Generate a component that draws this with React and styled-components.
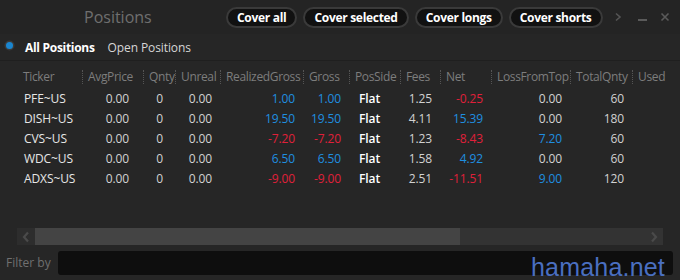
import React from 'react';
import styled, { createGlobalStyle } from 'styled-components';

const Global = createGlobalStyle`
  html, body {
    margin: 0;
    padding: 0;
    background: #262626;
  }
  body {
    font-family: "Open Sans", "Noto Sans", sans-serif;
  }
`;

const Window = styled.div`
  position: relative;
  width: 680px;
  height: 280px;
  background: #262626;
  display: flex;
  flex-direction: column;
  overflow: hidden;
`;

const TitleBar = styled.div`
  height: 34px;
  display: flex;
  align-items: center;
  background: #242424;
`;

const Title = styled.div`
  margin-left: 84px;
  width: 142px;
  flex-shrink: 0;
  font-size: 16px;
  color: #6f6f6f;
`;

const Buttons = styled.div`
  display: flex;
  gap: 6px;
  flex-shrink: 0;
`;

const Pill = styled.button`
  height: 21px;
  padding: 0 9px;
  border-radius: 11px;
  border: 2px solid #3a3a3a;
  background: #111111;
  color: #ffffff;
  font-family: "Open Sans", sans-serif;
  font-weight: 700;
  font-size: 12px;
  letter-spacing: -0.3px;
  line-height: 17px;
  white-space: nowrap;
`;

const WinCtl = styled.div`
  display: flex;
  align-items: center;
  margin-left: 11px;
`;

const Ctl = styled.svg`
  margin-left: ${p => p.gap || 0}px;
`;

const Tabs = styled.div`
  height: 26px;
  display: flex;
  align-items: center;
  border-bottom: 1px solid #1f1f1f;
  font-size: 12px;
`;

const Radio = styled.span`
  width: 7px;
  height: 7px;
  margin: 0 8px 4px 6px;
  border-radius: 50%;
  background: #1a86d0;
  box-shadow: 0 0 0 1.5px #3a3a3a;
`;

const Tab = styled.span`
  padding: 0 9px 0 4px;
  color: ${p => (p.active ? '#ffffff' : '#d6d6d6')};
  font-weight: ${p => (p.active ? 700 : 400)};
  letter-spacing: ${p => (p.active ? '-0.3px' : '-0.1px')};
`;

const Grid = styled.div`
  padding: 4px 0 0 20px;
  flex: 1;
  font-size: 12px;
`;

const cols = '62px 61px 32px 45px 83px 46px 51px 40px 51px 79px 62px 48px';

const Row = styled.div`
  display: grid;
  grid-template-columns: ${cols};
  height: 20px;
  align-items: center;
`;

const HeadRow = styled(Row)`
  height: 23px;
`;

const Head = styled.div`
  color: #7d7d7d;
  padding-left: ${p => (p.first ? '3px' : '5px')};
  white-space: nowrap;
  letter-spacing: -0.35px;
  border-left: ${p => (p.first ? 'none' : '1px dotted #555')};
  line-height: 14px;
`;

const Cell = styled.div`
  text-align: ${p => (p.left ? 'left' : 'right')};
  padding: ${p => (p.left ? `0 0 0 ${p.pl || 4}px` : `0 ${p.pr || 8}px 0 0`)};
  color: ${p => p.color || '#d2d2d2'};
  font-weight: ${p => (p.bold ? 600 : 400)};
  white-space: nowrap;
  letter-spacing: -0.1px;
`;

const Scroll = styled.div`
  margin: 0 17px;
  height: 17px;
  display: flex;
  background: #333333;
`;

const Arrow = styled.div`
  width: 18px;
  display: flex;
  align-items: center;
  justify-content: center;
  background: ${p => p.bg || 'transparent'};
`;

const Thumb = styled.div`
  width: 425px;
  background: #444444;
`;

const Track = styled.div`
  flex: 1;
`;

const Filter = styled.div`
  height: 35px;
  display: flex;
  align-items: center;
  padding: 0 7px 0 6px;
  gap: 7px;
`;

const FilterLabel = styled.span`
  color: #707070;
  font-size: 12px;
`;

const Input = styled.div`
  flex: 1;
  height: 24px;
  background: #0e0e0e;
  border-radius: 3px;
`;

const Watermark = styled.div`
  position: absolute;
  right: 15px;
  bottom: -2px;
  font-family: "Liberation Sans", Arial, sans-serif;
  font-size: 25px;
  color: #4a6fc0;
  letter-spacing: 0.2px;
`;

const BLUE = '#1f8fe0';
const RED = '#e0203a';

const rows = [
  ['PFE~US', '1.00', '1.25', '-0.25', '0.00', '60'],
  ['DISH~US', '19.50', '4.11', '15.39', '0.00', '180'],
  ['CVS~US', '-7.20', '1.23', '-8.43', '7.20', '60'],
  ['WDC~US', '6.50', '1.58', '4.92', '0.00', '60'],
  ['ADXS~US', '-9.00', '2.51', '-11.51', '9.00', '120'],
];

const sign = v => (v.startsWith('-') ? RED : BLUE);
const headers = ['Ticker', 'AvgPrice', 'Qnty', 'Unreal', 'RealizedGross', 'Gross', 'PosSide', 'Fees', 'Net', 'LossFromTop', 'TotalQnty', 'Used'];

const App = () => {
  return (
    <>
      <Global />
      <Window>
        <TitleBar>
          <Title>Positions</Title>
          <Buttons>
            <Pill>Cover all</Pill>
            <Pill>Cover selected</Pill>
            <Pill>Cover longs</Pill>
            <Pill>Cover shorts</Pill>
          </Buttons>
          <WinCtl>
            <Ctl width="8" height="10" viewBox="0 0 8 10">
              <path d="M2 1.5 L6 5 L2 8.5" stroke="#555" strokeWidth="1.6" fill="none" />
            </Ctl>
            <Ctl gap={15} width="12" height="10" viewBox="0 0 12 10">
              <path d="M1 8 H10" stroke="#5a5a5a" strokeWidth="2" />
            </Ctl>
            <Ctl gap={11} width="10" height="10" viewBox="0 0 10 10">
              <path d="M1.5 1.5 L8.5 8.5 M8.5 1.5 L1.5 8.5" stroke="#5a5a5a" strokeWidth="1.6" />
            </Ctl>
          </WinCtl>
        </TitleBar>
        <Tabs>
          <Radio />
          <Tab active>All Positions</Tab>
          <Tab>Open Positions</Tab>
        </Tabs>
        <Grid>
          <HeadRow>
            {headers.map((h, i) => (
              <Head key={h} first={i === 0}>{h}</Head>
            ))}
          </HeadRow>
          {rows.map(r => (
            <Row key={r[0]}>
              <Cell left color="#e6e6e6">{r[0]}</Cell>
              <Cell pr={14}>0.00</Cell>
              <Cell pr={12}>0</Cell>
              <Cell>0.00</Cell>
              <Cell color={sign(r[1])}>{r[1]}</Cell>
              <Cell pr={8} color={sign(r[1])}>{r[1]}</Cell>
              <Cell left pl={10} bold color="#ffffff">Flat</Cell>
              <Cell>{r[2]}</Cell>
              <Cell color={sign(r[3])}>{r[3]}</Cell>
              <Cell color={r[4] === '0.00' ? '#d2d2d2' : BLUE}>{r[4]}</Cell>
              <Cell>{r[5]}</Cell>
              <Cell />
            </Row>
          ))}
        </Grid>
        <Scroll>
          <Arrow bg="#2d2d2d">
            <svg width="8" height="12" viewBox="0 0 8 12">
              <path d="M6 1.5 L2 6 L6 10.5" stroke="#4a4a4a" strokeWidth="2.2" fill="none" />
            </svg>
          </Arrow>
          <Thumb />
          <Track />
          <Arrow>
            <svg width="8" height="12" viewBox="0 0 8 12">
              <path d="M2 1.5 L6 6 L2 10.5" stroke="#4a4a4a" strokeWidth="2.2" fill="none" />
            </svg>
          </Arrow>
        </Scroll>
        <Filter>
          <FilterLabel>Filter by</FilterLabel>
          <Input />
        </Filter>
        <Watermark>hamaha.net</Watermark>
      </Window>
    </>
  );
};

export default App;
